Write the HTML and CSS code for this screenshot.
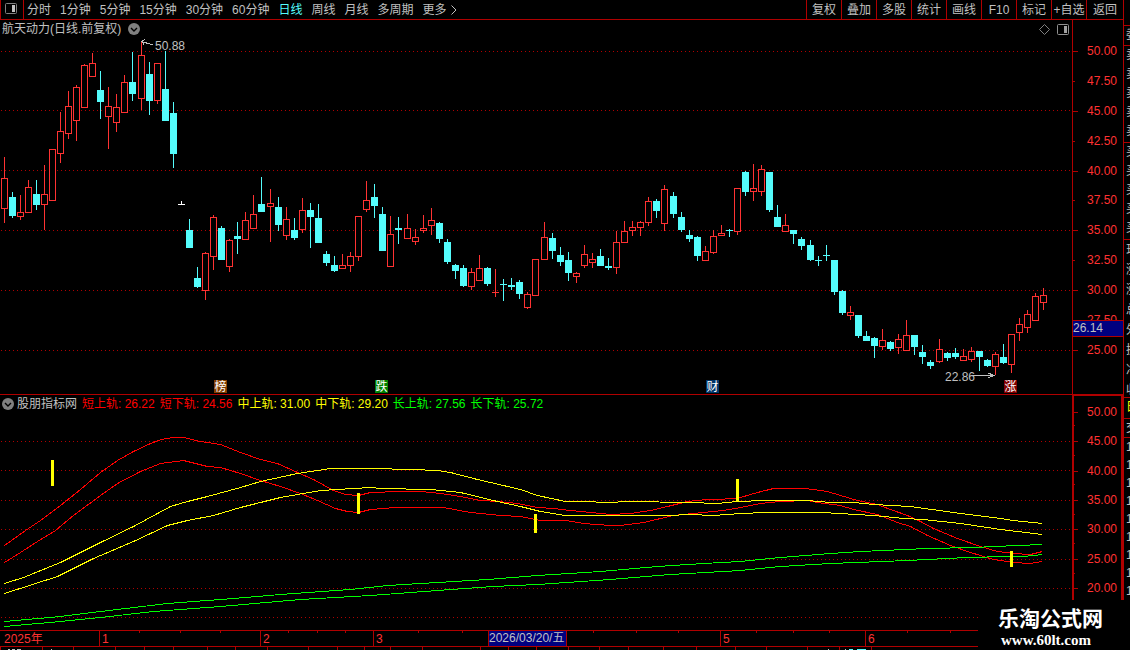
FILE: index.html
```html
<!DOCTYPE html>
<html lang="zh-CN">
<head>
  <meta charset="UTF-8" />
  <meta name="viewport" content="width=device-width, initial-scale=1.0" />
  <title>航天动力 日线</title>
  <link rel="stylesheet" href="styles.css">
</head>
<body>
  <div class="terminal">
    <div class="main">
      <header class="toolbar">
        <button class="layout-btn" aria-label="布局">
          <svg width="12" height="11" viewBox="0 0 12 11">
            <rect x="0.5" y="0.5" width="11" height="10" rx="1" fill="none" stroke="#808080" />
            <rect x="7" y="2" width="3" height="7" fill="#c0c0c0" />
          </svg>
        </button>
        <nav class="periods">
          <button>分时</button>
          <button>1分钟</button>
          <button>5分钟</button>
          <button>15分钟</button>
          <button>30分钟</button>
          <button>60分钟</button>
          <button class="active">日线</button>
          <button>周线</button>
          <button>月线</button>
          <button>多周期</button>
          <button class="more">更多
            <svg width="6" height="10" viewBox="0 0 6 10"><path d="M0.5 0.5 L5 5 L0.5 9.5" fill="none" stroke="#c0c0c0" /></svg>
          </button>
        </nav>
        <div class="tools">
          <button>复权</button>
          <button>叠加</button>
          <button>多股</button>
          <button>统计</button>
          <button>画线</button>
          <button>F10</button>
          <button>标记</button>
          <button>+自选</button>
          <button>返回</button>
        </div>
      </header>

      <section class="pane price-pane">
        <div class="plot">
          <div class="plot-head">
            <span>航天动力(日线.前复权)</span>
            <button class="fold" aria-label="展开">
              <svg width="12" height="12" viewBox="0 0 12 12"><circle cx="6" cy="6" r="6" fill="#808080" /><path d="M3 5 L6 8 L9 5" fill="none" stroke="#000" stroke-width="1.4" /></svg>
            </button>
            <div class="head-icons">
              <svg width="11" height="11" viewBox="0 0 11 11"><path d="M5.5 0.5 L10.5 5.5 L5.5 10.5 L0.5 5.5 Z" fill="none" stroke="#808080" /></svg>
              <svg width="12" height="11" viewBox="0 0 12 11">
                <rect x="0.5" y="0.5" width="11" height="10" rx="1" fill="none" stroke="#909090" />
                <rect x="7" y="2" width="3" height="7" fill="#a0a0a0" />
              </svg>
            </div>
          </div>
          <svg class="price-chart" viewBox="0 38 1072 356" preserveAspectRatio="none">
            <g class="grid" id="priceGrid"></g>
            <g id="candles"></g>
            <g class="note">
              <path d="M141.5 41.5 L153 45 M145 39.5 L141.5 41.5 L144 44.5" />
              <text x="155" y="50">50.88</text>
              <path d="M972 375.5 H994 M988 373 L994 375.5 L988 378" />
              <text x="945" y="381">22.86</text>
            </g>
            <g class="badges" id="badges"></g>
          </svg>
        </div>
        <div class="axis price-axis">
          <ul>
            <li>50.00</li>
            <li class="minor">47.50</li>
            <li>45.00</li>
            <li class="minor">42.50</li>
            <li>40.00</li>
            <li class="minor">37.50</li>
            <li>35.00</li>
            <li class="minor">32.50</li>
            <li>30.00</li>
            <li class="minor">27.50</li>
            <li>25.00</li>
          </ul>
          <div class="price-tag">26.14</div>
        </div>
      </section>

      <section class="pane track-pane">
        <div class="plot">
          <div class="plot-head">
            <button class="fold" aria-label="展开">
              <svg width="12" height="12" viewBox="0 0 12 12"><circle cx="6" cy="6" r="6" fill="#808080" /><path d="M3 5 L6 8 L9 5" fill="none" stroke="#000" stroke-width="1.4" /></svg>
            </button>
            <div class="legend">
              <span>股朋指标网</span>
              <span class="short">短上轨: 26.22</span>
              <span class="short">短下轨: 24.56</span>
              <span class="mid">中上轨: 31.00</span>
              <span class="mid">中下轨: 29.20</span>
              <span class="long">长上轨: 27.56</span>
              <span class="long">长下轨: 25.72</span>
            </div>
          </div>
          <svg class="track-chart" viewBox="0 412 1072 218" preserveAspectRatio="none">
            <g class="grid" id="trackGrid"></g>
            <g class="tracks" id="tracks"></g>
            <g class="signals" id="signals"></g>
          </svg>
        </div>
        <div class="axis track-axis">
          <ul>
            <li>50.00</li>
            <li>45.00</li>
            <li>40.00</li>
            <li>35.00</li>
            <li>30.00</li>
            <li>25.00</li>
            <li>20.00</li>
          </ul>
        </div>
      </section>

      <div class="time-axis">
        <span>2025年</span>
        <span>1</span>
        <span>2</span>
        <span>3</span>
        <span>5</span>
        <span>6</span>
        <svg class="ticks" viewBox="0 0 1072 2" preserveAspectRatio="none" id="timeTicks"></svg>
        <div class="cursor-date">2026/03/20/五</div>
      </div>
      <svg class="tab-edge" viewBox="0 0 1123 3" preserveAspectRatio="none" id="tabEdge"></svg>
    </div>

    <aside class="quote">
      <div class="block gap"></div>
      <div class="block one">委比</div>
      <div class="block five">
        <div>卖五</div><div>卖四</div><div>卖三</div><div>卖二</div><div>卖一</div>
      </div>
      <div class="block five">
        <div>买一</div><div>买二</div><div>买三</div><div>买四</div><div>买五</div>
      </div>
      <div class="block info">
        <div>现价</div><div>涨跌</div><div>涨幅</div><div>总量</div><div>外盘</div><div>换手</div><div>净资</div><div>收益</div>
      </div>
      <div class="block one yellow">日</div>
      <div class="block deal">交</div>
      <div class="block times">
        <div>14:56</div><div>14:56</div><div>14:56</div><div>14:56</div><div>14:56</div><div>14:56</div><div>14:57</div><div>14:57</div><div>15:00</div>
      </div>
    </aside>

    <div class="brand">
      <strong>乐淘公式网</strong>
      <span>www.60lt.com</span>
    </div>
  </div>
  <script src="script.js"></script>
</body>
</html>
```
FILE: styles.css
```css
* {
  box-sizing: border-box;
}

body {
  margin: 0;
  background: #000;
  color: #c0c0c0;
  font-family: "Liberation Sans", "Noto Sans CJK SC", sans-serif;
  font-size: 12px;
  line-height: 18px;
  overflow: hidden;
}

button {
  padding: 0;
  border: 0;
  background: none;
  color: inherit;
  font: inherit;
  white-space: nowrap;
  cursor: pointer;
}

svg {
  display: block;
}

ul {
  list-style: none;
  margin: 0;
  padding: 0;
}

.terminal {
  position: relative;
  display: flex;
  min-height: 100vh;
}

.main {
  flex: 1;
  min-width: 0;
}

/* top bar */
.toolbar {
  display: flex;
  height: 20px;
  border-bottom: 1px solid #b00000;
}

.layout-btn {
  display: flex;
  width: 24px;
  padding: 3px 0 0 4px;
  border-left: 1px solid #b00000;
  border-right: 1px solid #b00000;
}

.periods {
  display: flex;
  flex: 1;
  gap: 9px;
  padding-left: 3px;
}

.periods .active {
  color: #54fcfc;
}

.more {
  display: flex;
  align-items: center;
  gap: 4px;
}

.tools {
  display: flex;
}

.tools button {
  width: 35px;
  border-left: 1px solid #b00000;
}

.tools button:last-child {
  width: 37px;
}

/* chart panes */
.pane {
  display: flex;
}

.plot {
  flex: 1;
  min-width: 0;
}

.plot-head {
  display: flex;
  align-items: center;
  gap: 7px;
  height: 18px;
  padding: 0 3px 0 2px;
}

.legend {
  display: flex;
  gap: 5px;
  white-space: nowrap;
}

.head-icons {
  display: flex;
  gap: 7px;
  margin-left: auto;
}

.plot svg {
  shape-rendering: crispEdges;
}

.plot-head svg {
  shape-rendering: auto;
}

.price-chart {
  width: 100%;
  height: 356px;
}

.track-chart {
  width: 100%;
  height: 218px;
}

.price-pane {
  border-bottom: 1px solid #b00000;
}

.track-pane .plot-head {
  gap: 3px;
  height: 17px;
}

.short {
  color: #f00;
}

.mid {
  color: #ff0;
}

.long {
  color: #0f0;
}

.grid line {
  stroke: #b00000;
  stroke-dasharray: 1 3;
}

.up {
  fill: #000;
  stroke: #ff3232;
}

.down {
  fill: #54fcfc;
  stroke: #54fcfc;
}

.flat {
  fill: none;
  stroke: #fff;
}

.note path {
  fill: none;
  stroke: #c0c0c0;
}

.note text {
  fill: #c0c0c0;
}

.badges text {
  fill: #fff;
  text-anchor: middle;
}

.tracks polyline {
  fill: none;
}

.signals {
  fill: #ff0;
}

/* value axes */
.axis {
  position: relative;
  width: 51px;
  border-left: 1px solid #b00000;
  color: #ff3232;
}

.axis ul {
  display: flex;
  flex-direction: column;
}

.axis li {
  position: relative;
  display: flex;
  flex: 1;
  align-items: center;
  padding-left: 14px;
}

.axis li::before {
  content: "";
  position: absolute;
  left: 0;
  top: 50%;
  width: 5px;
  border-top: 1px solid #b00000;
}

.axis .minor::before {
  width: 2px;
}

.price-axis ul {
  height: 329px;
  margin-top: 16px;
}

.price-tag {
  position: absolute;
  left: 0;
  right: 0;
  top: 300px;
  height: 17px;
  border-top: 1px solid #b00000;
  border-bottom: 1px solid #b00000;
  background: #000080;
  color: #c0c0c0;
  line-height: 15px;
}

.track-axis {
  border: 2px solid #b00000;
  border-top-width: 1px;
  border-bottom: 0;
}

.track-axis ul {
  height: 206px;
  margin-top: 1px;
}

.track-axis li {
  padding-left: 13px;
}

.track-axis li::before {
  width: 4px;
}

.track-axis li::after {
  content: "";
  position: absolute;
  left: 0;
  bottom: 0;
  width: 1px;
  border-top: 1px solid #b00000;
}

/* dates */
.time-axis {
  position: relative;
  display: grid;
  grid-template-columns: 99fr 161fr 113fr 347fr 145fr 207fr;
  height: 17px;
  padding-right: 51px;
  border-top: 1px solid #b00000;
  border-bottom: 1px solid #b00000;
  color: #ff3232;
  line-height: 16px;
}

.time-axis span {
  padding-left: 2px;
  border-left: 1px solid #b00000;
}

.time-axis span:first-child {
  padding-left: 4px;
  border-left: 0;
}

.ticks {
  position: absolute;
  left: 0;
  top: 0;
  width: calc(100% - 51px);
  height: 2px;
}

.cursor-date {
  position: absolute;
  left: 488px;
  top: 0;
  width: 79px;
  height: 15px;
  border-left: 1px solid #b00000;
  border-right: 1px solid #b00000;
  background: #000080;
  color: #c0c0c0;
  line-height: 15px;
  white-space: nowrap;
}

.tab-edge {
  width: 100%;
  height: 3px;
  shape-rendering: crispEdges;
}

/* quote column, mostly scrolled out on the right */
.quote {
  width: 7px;
  border-left: 1px solid #b00000;
  overflow: hidden;
  white-space: nowrap;
}

.block {
  width: 120px;
  padding-left: 2px;
  border-bottom: 1px solid #b00000;
}

.gap {
  height: 26px;
}

.one {
  height: 20px;
  line-height: 19px;
}

.five {
  height: 97px;
  line-height: 19px;
}

.info {
  height: 158px;
  line-height: 20px;
}

.yellow {
  height: 21px;
  color: #ff0;
}

.deal {
  height: 19px;
}

.times {
  border-bottom: 0;
}

.brand {
  position: absolute;
  right: 0;
  bottom: 0;
  width: 152px;
  height: 50px;
  padding: 7px 0 0 20px;
  background: #000;
  color: #fff;
}

.brand strong {
  display: block;
  font-size: 21px;
  line-height: 24px;
}

.brand span {
  display: block;
  padding-left: 3px;
  font: bold 15px/18px "Liberation Serif", serif;
}
```
FILE: script.js
```js
const NS = 'http://www.w3.org/2000/svg';

function add(parent, tag, attrs, text) {
  const el = document.createElementNS(NS, tag);
  for (const key in attrs) el.setAttribute(key, attrs[key]);
  if (text) el.textContent = text;
  parent.appendChild(el);
  return el;
}

const byId = id => document.getElementById(id);

// high, body top, body bottom, low, type (u = up, d = down, f = flat)
const candles = `157 178 209 223 u|192 197 216 218 d|195 212 217 220 u|180 187 213 213 u|180 194 205 210 d
165 194 205 230 u|149 149 201 201 u|112 131 154 163 u|91 106 134 139 u|85 87 121 141 u
64 65 108 108 u|53 63 77 77 u|71 90 102 119 d|87 106 117 149 u|94 107 123 132 u
75 82 113 113 u|52 82 94 101 d|41 55 99 110 u|62 74 101 115 d|63 63 101 104 u
51 89 121 121 d|102 113 154 168 d|201 204 205 205 f|219 230 248 248 d|267 278 287 288 d
252 253 291 300 u|215 217 257 270 u|226 228 260 260 d|239 240 267 272 u|222 236 239 254 d
212 220 240 240 u|195 214 229 229 u|177 204 212 212 d|189 203 207 242 u|197 207 225 231 d
207 219 236 240 u|218 230 238 240 d|198 210 230 233 u|203 210 217 248 d|204 218 243 243 d
251 254 263 266 d|256 265 271 272 d|254 265 269 269 u|252 256 266 272 u|216 216 257 261 u
181 200 210 212 u|184 197 206 218 d|207 214 251 251 d|216 234 267 267 u|217 228 230 244 d
214 228 239 239 u|229 237 242 245 u|215 228 231 233 u|208 220 226 235 u|222 223 239 243 d
239 242 262 264 d|264 265 271 279 d|265 268 286 287 d|268 272 287 290 u|255 268 281 281 u
267 268 284 286 d|269 292 293 297 u|279 284 285 301 d|278 285 287 290 d|280 282 294 299 d
292 294 308 309 u|259 259 296 296 u|222 237 260 260 u|233 238 251 259 d|247 255 262 266 d
252 260 273 281 d|272 273 277 283 u|245 254 266 268 u|253 259 263 268 u|249 256 266 266 d
258 266 268 270 d|231 242 268 274 u|221 231 243 243 u|221 227 231 236 u|221 222 228 236 u
197 201 223 226 u|199 201 211 218 d|185 189 224 231 u|192 196 214 218 d|212 217 230 232 d
230 235 239 242 d|236 237 256 261 d|246 251 261 261 u|230 236 253 254 u|225 233 236 236 u
229 230 231 237 d|188 188 232 235 u|171 172 192 196 d|164 188 192 201 u|165 169 192 196 u
172 172 210 212 d|205 217 227 227 d|214 225 232 232 u|230 230 234 244 d|237 239 246 250 d
240 245 260 261 d|256 260 261 266 d|245 255 256 261 d|260 260 292 295 d|290 291 313 315 d
306 312 316 320 u|315 315 336 338 d|331 336 341 341 d|337 338 346 358 d|329 340 347 350 u
341 342 349 351 d|334 339 348 354 u|320 335 351 351 u|335 335 347 355 d|345 352 357 364 d
360 362 366 369 d|339 349 362 363 u|352 353 358 361 d|348 353 357 359 d|349 356 361 361 u
347 351 360 362 u|351 351 357 371 d|359 360 366 367 d|352 354 367 375 u|344 357 363 364 d
334 334 365 373 u|318 324 333 341 u|310 314 328 333 u|293 296 321 321 u|288 295 303 310 u`;

const kinds = { u: 'up', d: 'down', f: 'flat' };

candles.split(/[|\n]/).forEach((row, i) => {
  const [high, top, bottom, low, kind] = row.split(' ');
  const x = Math.floor(4.02 + 8.0602 * i);
  const g = add(byId('candles'), 'g', { class: kinds[kind] });
  add(g, 'line', { x1: x + 0.5, x2: x + 0.5, y1: high, y2: low });
  if (bottom - top <= 1) {
    add(g, 'line', { x1: x - 3, x2: x + 4, y1: +top + 0.5, y2: +top + 0.5 });
  } else {
    add(g, 'rect', { x: x - 2.5, y: +top + 0.5, width: 6, height: bottom - top - 1 });
  }
});

function drawGrid(id, rows) {
  rows.forEach(y => add(byId(id), 'line', { x1: 1, x2: 1072, y1: y + 0.5, y2: y + 0.5 }));
}

drawGrid('priceGrid', [51, 110, 170, 230, 290, 350]);
drawGrid('trackGrid', [441, 470, 500, 529, 559, 588, 617]);

[
  [214, '榜', '#803c00'],
  [375, '跌', '#008000'],
  [706, '财', '#003468'],
  [1004, '涨', '#800000']
].forEach(([x, label, color]) => {
  add(byId('badges'), 'rect', { x, y: 380, width: 13, height: 13, fill: color });
  add(byId('badges'), 'text', { x: x + 6.5, y: 391 }, label);
});

const tracks = [
  ['#f00', '4,545 25,530 40,520 60,505 80,489 100,472 117,460 133,451 150,443 161,439 167,438 172,437 183,437 200,441 220,444 240,452 260,459 277,463 297,472 313,479 333,490 345,494 358,495 370,492 400,491 420,491 440,493 460,496 480,500 498,501 517,503 537,507 553,508 570,510 590,512 610,514 630,513 650,510 667,506 687,501 707,499 717,499 732,498 740,497 757,492 773,488 805,488 827,491 840,495 857,500 877,504 890,509 907,515 920,521 933,528 957,538 980,546 997,551 1013,553 1030,554 1042,551'],
  ['#f00', '4,562 20,552 37,541 55,530 73,515 100,495 117,483 140,471 160,463 183,460 207,466 220,467 240,473 260,480 280,486 300,493 317,500 335,508 347,511 358,512 370,509 395,507 443,507 470,512 500,515 520,516 540,520 565,520 583,523 610,525 620,525 643,522 673,515 693,513 723,510 740,507 760,503 780,501 807,500 817,502 840,505 853,509 877,514 897,522 910,526 927,535 950,545 970,552 993,559 1013,562 1030,563 1042,561'],
  ['#ff0', '4,583 23,577 60,562 100,542 133,526 170,506 187,501 207,496 240,487 260,481 297,473 330,468 370,468 412,469 437,470 450,472 477,479 520,489 537,495 565,501 583,501 608,502 627,501 690,502 717,503 737,501 765,500 807,500 830,502 853,502 873,504 910,506 953,512 1000,518 1013,520 1042,523'],
  ['#ff0', '4,593 57,576 93,558 133,541 167,525 187,520 213,515 240,507 280,497 320,490 370,487 380,488 430,489 460,492 497,501 520,506 540,511 565,515 667,515 690,514 713,515 740,513 765,512 822,512 873,515 903,518 923,519 960,523 1000,529 1042,534'],
  ['#0f0', '4,621 60,616 100,611 167,603 233,598 280,594 350,589 387,585 437,582 487,579 537,575 600,571 657,566 703,563 740,561 780,557 830,553 860,551 927,548 973,547 1017,545 1042,544'],
  ['#0f0', '4,626 60,621 100,617 153,611 220,606 300,599 370,595 437,590 493,586 537,584 610,579 670,574 740,570 780,566 830,563 907,560 967,557 1007,556 1023,556 1042,554']
];

tracks.forEach(([stroke, points]) => {
  add(byId('tracks'), 'polyline', { stroke, points, transform: 'translate(0.5 0.5)' });
});

[[51, 460, 486], [357, 493, 514], [534, 514, 533], [736, 479, 501], [1010, 551, 567]].forEach(([x, top, bottom]) => {
  add(byId('signals'), 'rect', { x, y: top, width: 3, height: bottom - top });
});

// week ticks under the indicator
[139, 180, 220, 288, 317, 345, 418, 462, 593, 636, 678, 756, 793, 829, 907, 950].forEach(x => {
  add(byId('timeTicks'), 'rect', { x, y: 0, width: 1, height: 2, fill: '#b00000' });
});

// upper edge of the tab row
[0, 42, 73, 115, 144, 173, 207, 235, 267, 308, 337, 364, 390, 422, 480, 508, 536, 568, 599, 628, 663, 696, 735, 766, 807, 839, 871].forEach(x => {
  add(byId('tabEdge'), 'rect', { x, y: 0, width: 1, height: 3, fill: '#b00000' });
});
[[8, 2], [12, 3], [17, 4], [51, 1], [828, 1], [845, 1]].forEach(([x, width]) => {
  add(byId('tabEdge'), 'rect', { x, y: 2, width, height: 1, fill: '#c0c0c0' });
});
[[849, 4], [857, 9]].forEach(([x, width]) => {
  add(byId('tabEdge'), 'rect', { x, y: 2, width, height: 1, fill: '#54fcfc' });
});
```
